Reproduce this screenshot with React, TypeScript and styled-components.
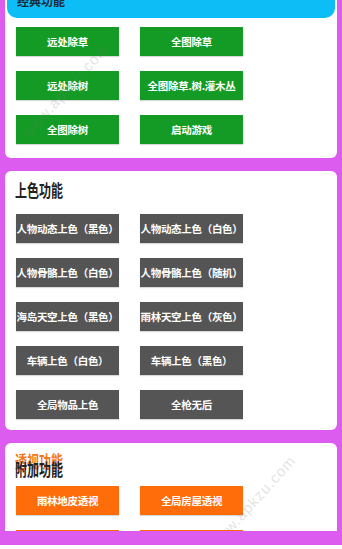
import React from 'react'
import styled, { createGlobalStyle } from 'styled-components'

const GlobalStyle = createGlobalStyle`
  html, body {
    margin: 0;
    padding: 0;
    background: #dd5cf0;
    overflow: hidden;
  }
  body {
    font-family: "Noto Sans CJK SC", "Noto Sans", sans-serif;
  }
`

type Tone = 'green' | 'gray' | 'orange'

const toneColor: Record<Tone, string> = {
  green: '#139b25',
  gray: '#555555',
  orange: '#ff6c0a',
}

const Page = styled.div`
  position: relative;
  width: 342px;
  height: 549px;
  overflow: hidden;
  padding: 0 5px;
  box-sizing: border-box;
  display: flex;
  flex-direction: column;
  gap: 13px;
  /* scrolled a little: the top of the first card is above the window */
  margin-top: -18px;
`

const Card = styled.section<{ $pb?: number }>`
  background: #fff;
  border-radius: 6px;
  padding-bottom: ${(p) => p.$pb ?? 12}px;
  flex-shrink: 0;
`

const TopHeader = styled.div`
  background: #0dbdf5;
  margin: 0 2px;
  height: 36px;
  border-radius: 0 0 10px 10px;
  padding: 0 10px;
  display: flex;
  align-items: flex-end;
  padding-bottom: 9px;
  box-sizing: border-box;
  font-size: 12px;
  font-weight: 700;
  color: #1a2a3a;
`

const Title = styled.div`
  position: relative;
  height: 38px;
  padding-left: 10px;
`

const TitleText = styled.span<{ $color: string; $top: number }>`
  position: absolute;
  left: 10px;
  top: ${(p) => p.$top}px;
  font-size: 12px;
  font-weight: 700;
  color: ${(p) => p.$color};
  transform: scaleY(1.45);
  transform-origin: top left;
  white-space: nowrap;
`

const Grid = styled.div<{ $pt: number }>`
  display: grid;
  grid-template-columns: 103px 103px;
  column-gap: 21px;
  row-gap: 15px;
  padding: ${(p) => p.$pt}px 0 0 11px;
`

const Btn = styled.div<{ $tone: Tone }>`
  height: 29px;
  background: ${(p) => toneColor[p.$tone]};
  color: #fff;
  display: flex;
  align-items: center;
  justify-content: center;
  font-size: 10.5px;
  font-weight: 700;
  white-space: nowrap;
  letter-spacing: -0.3px;
  box-shadow: 0 1px 1px rgba(0, 0, 0, 0.15);
`

const BottomStrip = styled.div`
  position: fixed;
  left: 0;
  right: 0;
  bottom: 0;
  height: 4px;
  background: #fff;
`

const Watermark = styled.div<{ $x: number; $y: number }>`
  position: absolute;
  left: ${(p) => p.$x}px;
  top: ${(p) => p.$y}px;
  transform: rotate(-48deg);
  transform-origin: left top;
  font-family: "Liberation Sans", sans-serif;
  font-size: 15px;
  letter-spacing: 1px;
  color: rgba(120, 120, 120, 0.22);
  pointer-events: none;
  white-space: nowrap;
`

const classic = ['远处除草', '全图除草', '远处除树', '全图除草.树.灌木丛', '全图除树', '启动游戏']
const coloring = [
  '人物动态上色（黑色）',
  '人物动态上色（白色）',
  '人物骨骼上色（白色）',
  '人物骨骼上色（随机）',
  '海岛天空上色（黑色）',
  '雨林天空上色（灰色）',
  '车辆上色（白色）',
  '车辆上色（黑色）',
  '全局物品上色',
  '全枪无后',
]
const extra = ['雨林地皮透视', '全局房屋透视', '全局无视代理', '添加自瞄']

export default function App() {
  return (
    <>
      <GlobalStyle />
      <Page>
        <Card $pb={14}>
          <TopHeader>经典功能</TopHeader>
          <Grid $pt={9}>
            {classic.map((t) => (
              <Btn key={t} $tone="green">{t}</Btn>
            ))}
          </Grid>
        </Card>

        <Card $pb={11}>
          <Title>
            <TitleText $color="#222" $top={6}>上色功能</TitleText>
          </Title>
          <Grid $pt={5}>
            {coloring.map((t) => (
              <Btn key={t} $tone="gray">{t}</Btn>
            ))}
          </Grid>
        </Card>

        <Card $pb={20}>
          <Title>
            <TitleText $color="#f07a1e" $top={5}>透视功能</TitleText>
            <TitleText $color="#222" $top={13}>附加功能</TitleText>
          </Title>
          <Grid $pt={5}>
            {extra.map((t) => (
              <Btn key={t} $tone="orange">{t}</Btn>
            ))}
          </Grid>
        </Card>

        <Watermark $x={18} $y={148}>www.apkzu.com</Watermark>
        <Watermark $x={205} $y={560}>www.apkzu.com</Watermark>
      </Page>
      <BottomStrip />
    </>
  )
}
